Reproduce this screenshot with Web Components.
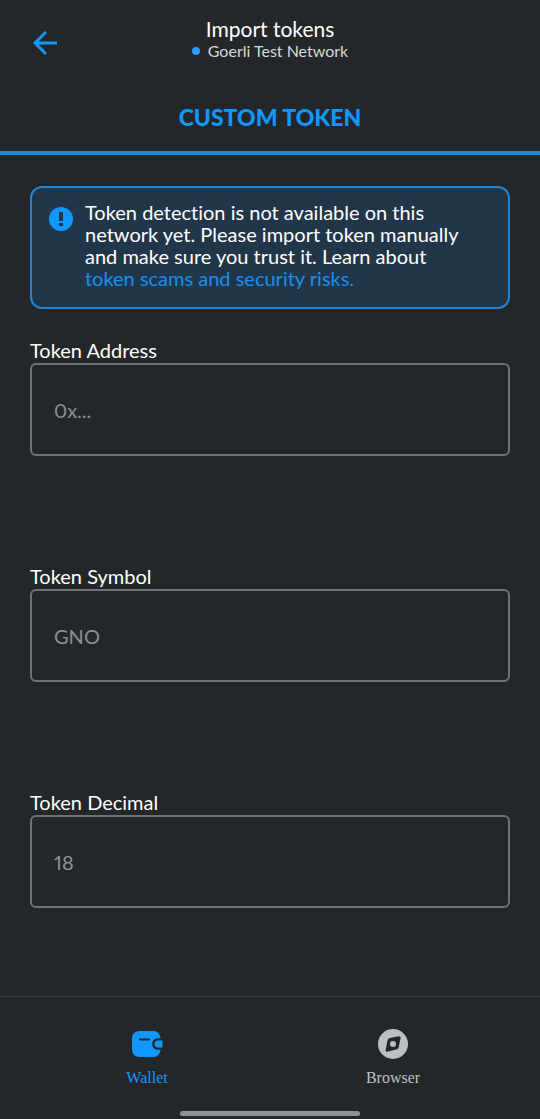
<!DOCTYPE html>
<html lang="en">
<head>
<meta charset="utf-8">
<meta name="viewport" content="width=device-width, initial-scale=1">
<title>Import tokens</title>
<style>
  html { height: 100%; }
  body {
    --bg: #24272a;
    --primary: #1098fc;
    --muted: #8c9094;
    margin: 0;
    min-height: 100%;
    background: var(--bg);
    color: #fff;
    font-family: Lato, sans-serif;
    font-size: 20px;
    font-variant-ligatures: none;
  }
</style>
</head>
<body>
<import-screen></import-screen>

<script>
const define = (name, html, setup) => {
  const template = document.createElement('template');
  template.innerHTML = html;
  customElements.define(name, class extends HTMLElement {
    constructor() {
      super();
      this.attachShadow({ mode: 'open' }).append(template.content.cloneNode(true));
    }
    connectedCallback() {
      if (setup) setup(this, this.shadowRoot);
    }
  });
};

define('screen-header', `
  <style>
    :host { display: grid; grid-template-columns: 60px 1fr 60px; align-items: center; padding: 17px 0 19px; }
    button { display: flex; padding: 8px 0 0; margin-left: 31px; border: 0; background: none; color: var(--primary); width: 28px; }
    .titles { display: flex; flex-direction: column; align-items: center; }
    h1 { margin: 0; font-size: 21px; line-height: 24px; font-weight: 400; }
    p { margin: 0; display: flex; align-items: center; gap: 8px; font-size: 16px; line-height: 20px; color: #d6d9dc; }
    i { width: 8px; height: 8px; border-radius: 50%; background: #2f9bf8; }
  </style>
  <button type="button" aria-label="Back">
    <svg width="28" height="28" viewBox="0 0 28 28" fill="none" stroke="currentColor" stroke-width="3">
      <path d="M26 14H4.500M15 3L4 14l11 11"/>
    </svg>
  </button>
  <div class="titles"><h1><slot></slot></h1><p><i></i><slot name="network"></slot></p></div>
`);

define('tab-bar', `
  <style>
    :host { display: flex; border-bottom: 4px solid #1a8ce4; }
    button { flex: 1; padding: 23px 0 20px; border: 0; background: none; color: var(--primary); font: 900 23px/28px Lato, sans-serif; text-transform: uppercase; }
  </style>
  <button type="button" role="tab" aria-selected="true"><slot></slot></button>
`);

define('info-banner', `
  <style>
    :host { display: flex; gap: 12px; padding: 13px 30px 18px 17px; border: 2px solid #2284d3; border-radius: 12px; background: #223649; }
    svg { flex: none; margin-top: 6px; }
    p { margin: 0; line-height: 22px; }
  </style>
  <svg width="24" height="24" viewBox="0 0 24 24" aria-hidden="true">
    <circle cx="12" cy="12" r="12" fill="#1098fc"/>
    <path d="M10 5h4v9h-4zM10 16h4v3h-4z" fill="#223649"/>
  </svg>
  <p><slot></slot></p>
`);

define('token-field', `
  <style>
    :host { display: flex; flex-direction: column; }
    label { line-height: 22px; padding-bottom: 2px; }
    input { box-sizing: border-box; width: 100%; height: 93px; padding: 0 22px; border: 2px solid #6f7376; border-radius: 6px; background: none; color: #fff; font: 20px/24px Lato, sans-serif; font-variant-numeric: proportional-nums; outline: none; }
    input::placeholder { color: var(--muted); opacity: 1; }
  </style>
  <label for="value"></label>
  <input id="value" type="text" autocomplete="off">
`, (host, root) => {
  root.querySelector('label').textContent = host.getAttribute('label');
  root.querySelector('input').placeholder = host.getAttribute('placeholder');
});

define('nav-item', `
  <style>
    :host { flex: 1; display: flex; justify-content: center; color: #bbc0c5; }
    :host([active]) { color: var(--primary); }
    a { display: flex; flex-direction: column; align-items: center; gap: 6px; color: inherit; text-decoration: none; font: 16px/24px "Liberation Serif", serif; }
  </style>
  <a href="#"><slot name="icon"></slot><slot></slot></a>
`);

define('bottom-nav', `
  <style>
    :host { display: block; border-top: 1px solid #3b3f42; }
    nav { display: flex; padding: 31px 24px 21px; }
    .handle { width: 180px; height: 5px; margin: 0 auto 3px; border-radius: 3px; background: #8f9093; }
  </style>
  <nav><slot></slot></nav>
  <div class="handle"></div>
`);

define('import-screen', `
  <style>
    :host { display: flex; flex-direction: column; min-height: 100vh; }
    main { flex: 1; display: flex; flex-direction: column; padding: 31px 30px 0; }
    form { display: flex; flex-direction: column; gap: 109px; margin-top: 30px; }
    a { color: #1b8feb; text-decoration: none; }
    svg { display: block; }
  </style>
  <screen-header>Import tokens<span slot="network">Goerli Test Network</span></screen-header>
  <tab-bar>Custom token</tab-bar>
  <main>
    <info-banner>Token detection is not available on this<br>network yet. Please import token manually<br>and make sure you trust it. Learn about<br><a href="#">token scams and security risks.</a></info-banner>
    <form>
      <token-field label="Token Address" placeholder="0x..."></token-field>
      <token-field label="Token Symbol" placeholder="GNO"></token-field>
      <token-field label="Token Decimal" placeholder="18"></token-field>
    </form>
  </main>
  <bottom-nav>
    <nav-item active>
      <svg slot="icon" width="32" height="32" viewBox="0 0 32 32" fill="none">
        <path d="M9 3h13c4 0 7 2.500 7.600 7.300H27c-3.500 0-5.800 2.500-5.800 5.700s2.300 5.700 5.800 5.700h2.600C29 26.500 26 29 22 29H9c-5 0-8-3-8-8V11c0-5 3-8 8-8z" fill="#1098fc"/>
        <path d="M31.500 12.500H27c-2 0-3.500 1.400-3.500 3.500s1.500 3.500 3.500 3.500h4.500z" fill="#1098fc"/>
        <path d="M9 11.500h9" stroke="#24272a" stroke-width="2.200" stroke-linecap="round"/>
      </svg>
      Wallet
    </nav-item>
    <nav-item>
      <svg slot="icon" width="32" height="32" viewBox="0 0 32 32">
        <circle cx="16" cy="16" r="15" fill="#bbc0c5"/>
        <path d="M13 10l8.500-1.800c1.500-.3 2.400.5 2.100 2L21.700 19c-.3 1.400-1.200 2.300-2.600 2.600L11 23.600c-1.700.4-2.700-.5-2.300-2.200L10.500 12.600c.3-1.400 1.100-2.300 2.500-2.600z" fill="#24272a"/>
        <circle cx="16" cy="16" r="3" fill="#bbc0c5"/>
      </svg>
      Browser
    </nav-item>
  </bottom-nav>
`);
</script>
</body>
</html>
